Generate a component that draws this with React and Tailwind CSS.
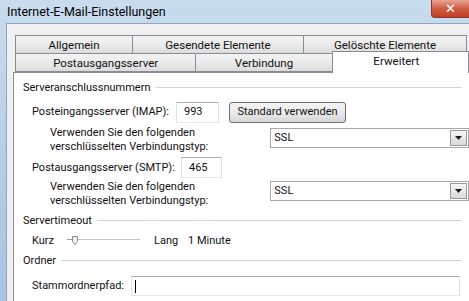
import React from 'react';

const font = { fontFamily: 'Roboto, "Noto Sans", sans-serif' };

const Section = ({ title, top }) => (
  <div className={`flex items-center h-[16px] ${top}`}>
    <span className="pr-[5px] whitespace-nowrap">{title}</span>
    <div className="flex-1 mr-[8px] border-t border-[#d3d3d3] border-b-white border-b h-0" />
  </div>
);

const TextBox = ({ value, w }) => (
  <div className={`${w} h-[21px] bg-white border border-[#abadb3] border-r-[#dbdfe6] border-b-[#e3e9ef] border-l-[#e2e3ea] flex items-center px-[7px]`}>
    {value}
  </div>
);

const Select = ({ top }) => (
  <div className={`w-[201px] h-[20px] bg-white border border-[#a7a7a7] flex items-center justify-between pl-[3px] pr-[1px] ${top}`}>
    <span>SSL</span>
    <div className="w-[17px] h-[16px] border border-[#9a9a9a] bg-gradient-to-b from-[#f6f6f6] to-[#d9d9d9] flex items-center justify-center">
      <svg width="7" height="4" viewBox="0 0 7 4"><path d="M0 0h7L3.5 4z" fill="#1a1a1a" /></svg>
    </div>
  </div>
);

const Tab = ({ label, w }) => (
  <div className={`${w} h-[19px] -ml-px first:ml-0 border border-[#898c95] bg-gradient-to-b from-[#f3f3f3] via-[#ebebeb] to-[#dcdcdc] flex items-center justify-center whitespace-nowrap`}>
    {label}
  </div>
);

export default function App() {
  return (
    <div className="w-[469px] h-[301px] overflow-hidden relative bg-gradient-to-b from-[#c9dcee] via-[#b6cfe7] to-[#a9c4df] text-[11px] text-[#111] leading-[14px]" style={font}>
      {/* title bar */}
      <div className="h-[23px] flex items-center pl-[7px] text-[12.5px] text-black">Internet-E-Mail-Einstellungen</div>
      <div className="absolute right-0 top-0 w-[38px] h-[18px] rounded-bl-[4px] border border-[#8d3a2c] border-t-0 border-r-0 bg-gradient-to-b from-[#e8a493] via-[#d05c44] to-[#c23e24] flex items-center justify-center">
        <span className="text-white text-[13px] font-bold leading-none" style={{ fontFamily: '"DejaVu Sans", sans-serif' }}>✕</span>
      </div>

      {/* window body */}
      <div className="ml-[6px] h-[278px] bg-[#f0f0f0] border-l border-t border-[#8ea6bf] pl-[6px] pt-[11px]">
        {/* tabs */}
        <div className="ml-[2px] flex text-[11.5px]">
          <Tab label="Allgemein" w="w-[118px]" />
          <Tab label="Gesendete Elemente" w="w-[172px]" />
          <Tab label="Gelöschte Elemente" w="w-[164px]" />
        </div>
        <div className="ml-[2px] flex -mt-px relative z-10 text-[11.5px]">
          <Tab label="Postausgangsserver" w="w-[185px]" />
          <Tab label="Verbindung" w="w-[140px]" />
          <div className="w-[140px] h-[22px] -mt-[2px] -ml-px bg-white border border-[#898c95] border-b-0 flex justify-center pt-[2px] pr-[8px]">Erweitert</div>
        </div>

        {/* panel */}
        <div className="-mt-[1px] h-[230px] bg-white border-l border-t border-[#898c95] pl-[9px] pt-[7px]">
          <Section title="Serveranschlussnummern" />

          <div className="flex items-center h-[22px] mt-[5px] pl-[9px]">
            <span className="w-[144px] whitespace-nowrap">Posteingangsserver (IMAP):</span>
            <TextBox value="993" w="w-[43px]" />
            <div className="ml-[10px] w-[117px] h-[21px] rounded-[3px] border border-[#707070] bg-gradient-to-b from-[#f2f2f2] via-[#ebebeb] to-[#d6d6d6] flex items-center justify-center whitespace-nowrap">Standard verwenden</div>
          </div>

          <div className="flex items-start h-[28px] mt-[3px]">
            <div className="w-[250px] pl-[27px] leading-[14px] whitespace-nowrap">Verwenden Sie den folgenden<br />verschlüsselten Verbindungstyp:</div>
            <Select top="mt-[2px]" />
          </div>

          <div className="flex items-center h-[21px] mt-[3px] pl-[9px]">
            <span className="w-[149px] whitespace-nowrap">Postausgangsserver (SMTP):</span>
            <TextBox value="465" w="w-[41px]" />
          </div>

          <div className="flex items-start h-[28px] mt-[2px]">
            <div className="w-[250px] pl-[27px] leading-[14px] whitespace-nowrap">Verwenden Sie den folgenden<br />verschlüsselten Verbindungstyp:</div>
            <Select top="mt-[1px]" />
          </div>

          <Section title="Servertimeout" top="mt-[5px]" />

          <div className="flex items-center h-[16px] mt-[4px] pl-[9px]">
            <span className="w-[34px]">Kurz</span>
            <svg width="76" height="14" viewBox="0 0 76 14">
              <path d="M1 5.5h5" stroke="#9a9a9a" />
              <path d="M12 5.5h62" stroke="#c4c4c4" strokeWidth="1.2" />
              <path d="M6.5 2.5h5v5l-2.5 3l-2.5-3z" fill="#f4f4f4" stroke="#8a8a8a" />
            </svg>
            <span className="ml-[12px] w-[34px]">Lang</span>
            <span className="whitespace-nowrap">1 Minute</span>
          </div>

          <Section title="Ordner" top="mt-[4px]" />

          <div className="flex items-center h-[20px] mt-[7px] pl-[9px]">
            <span className="w-[99px] whitespace-nowrap">Stammordnerpfad:</span>
            <div className="w-[329px] h-[20px] bg-white border border-[#abadb3] border-r-[#dbdfe6] border-b-[#e3e9ef] border-l-[#e2e3ea] flex items-center pl-[3px]">
              <div className="w-px h-[13px] bg-black" />
            </div>
          </div>
        </div>
      </div>
    </div>
  );
}
